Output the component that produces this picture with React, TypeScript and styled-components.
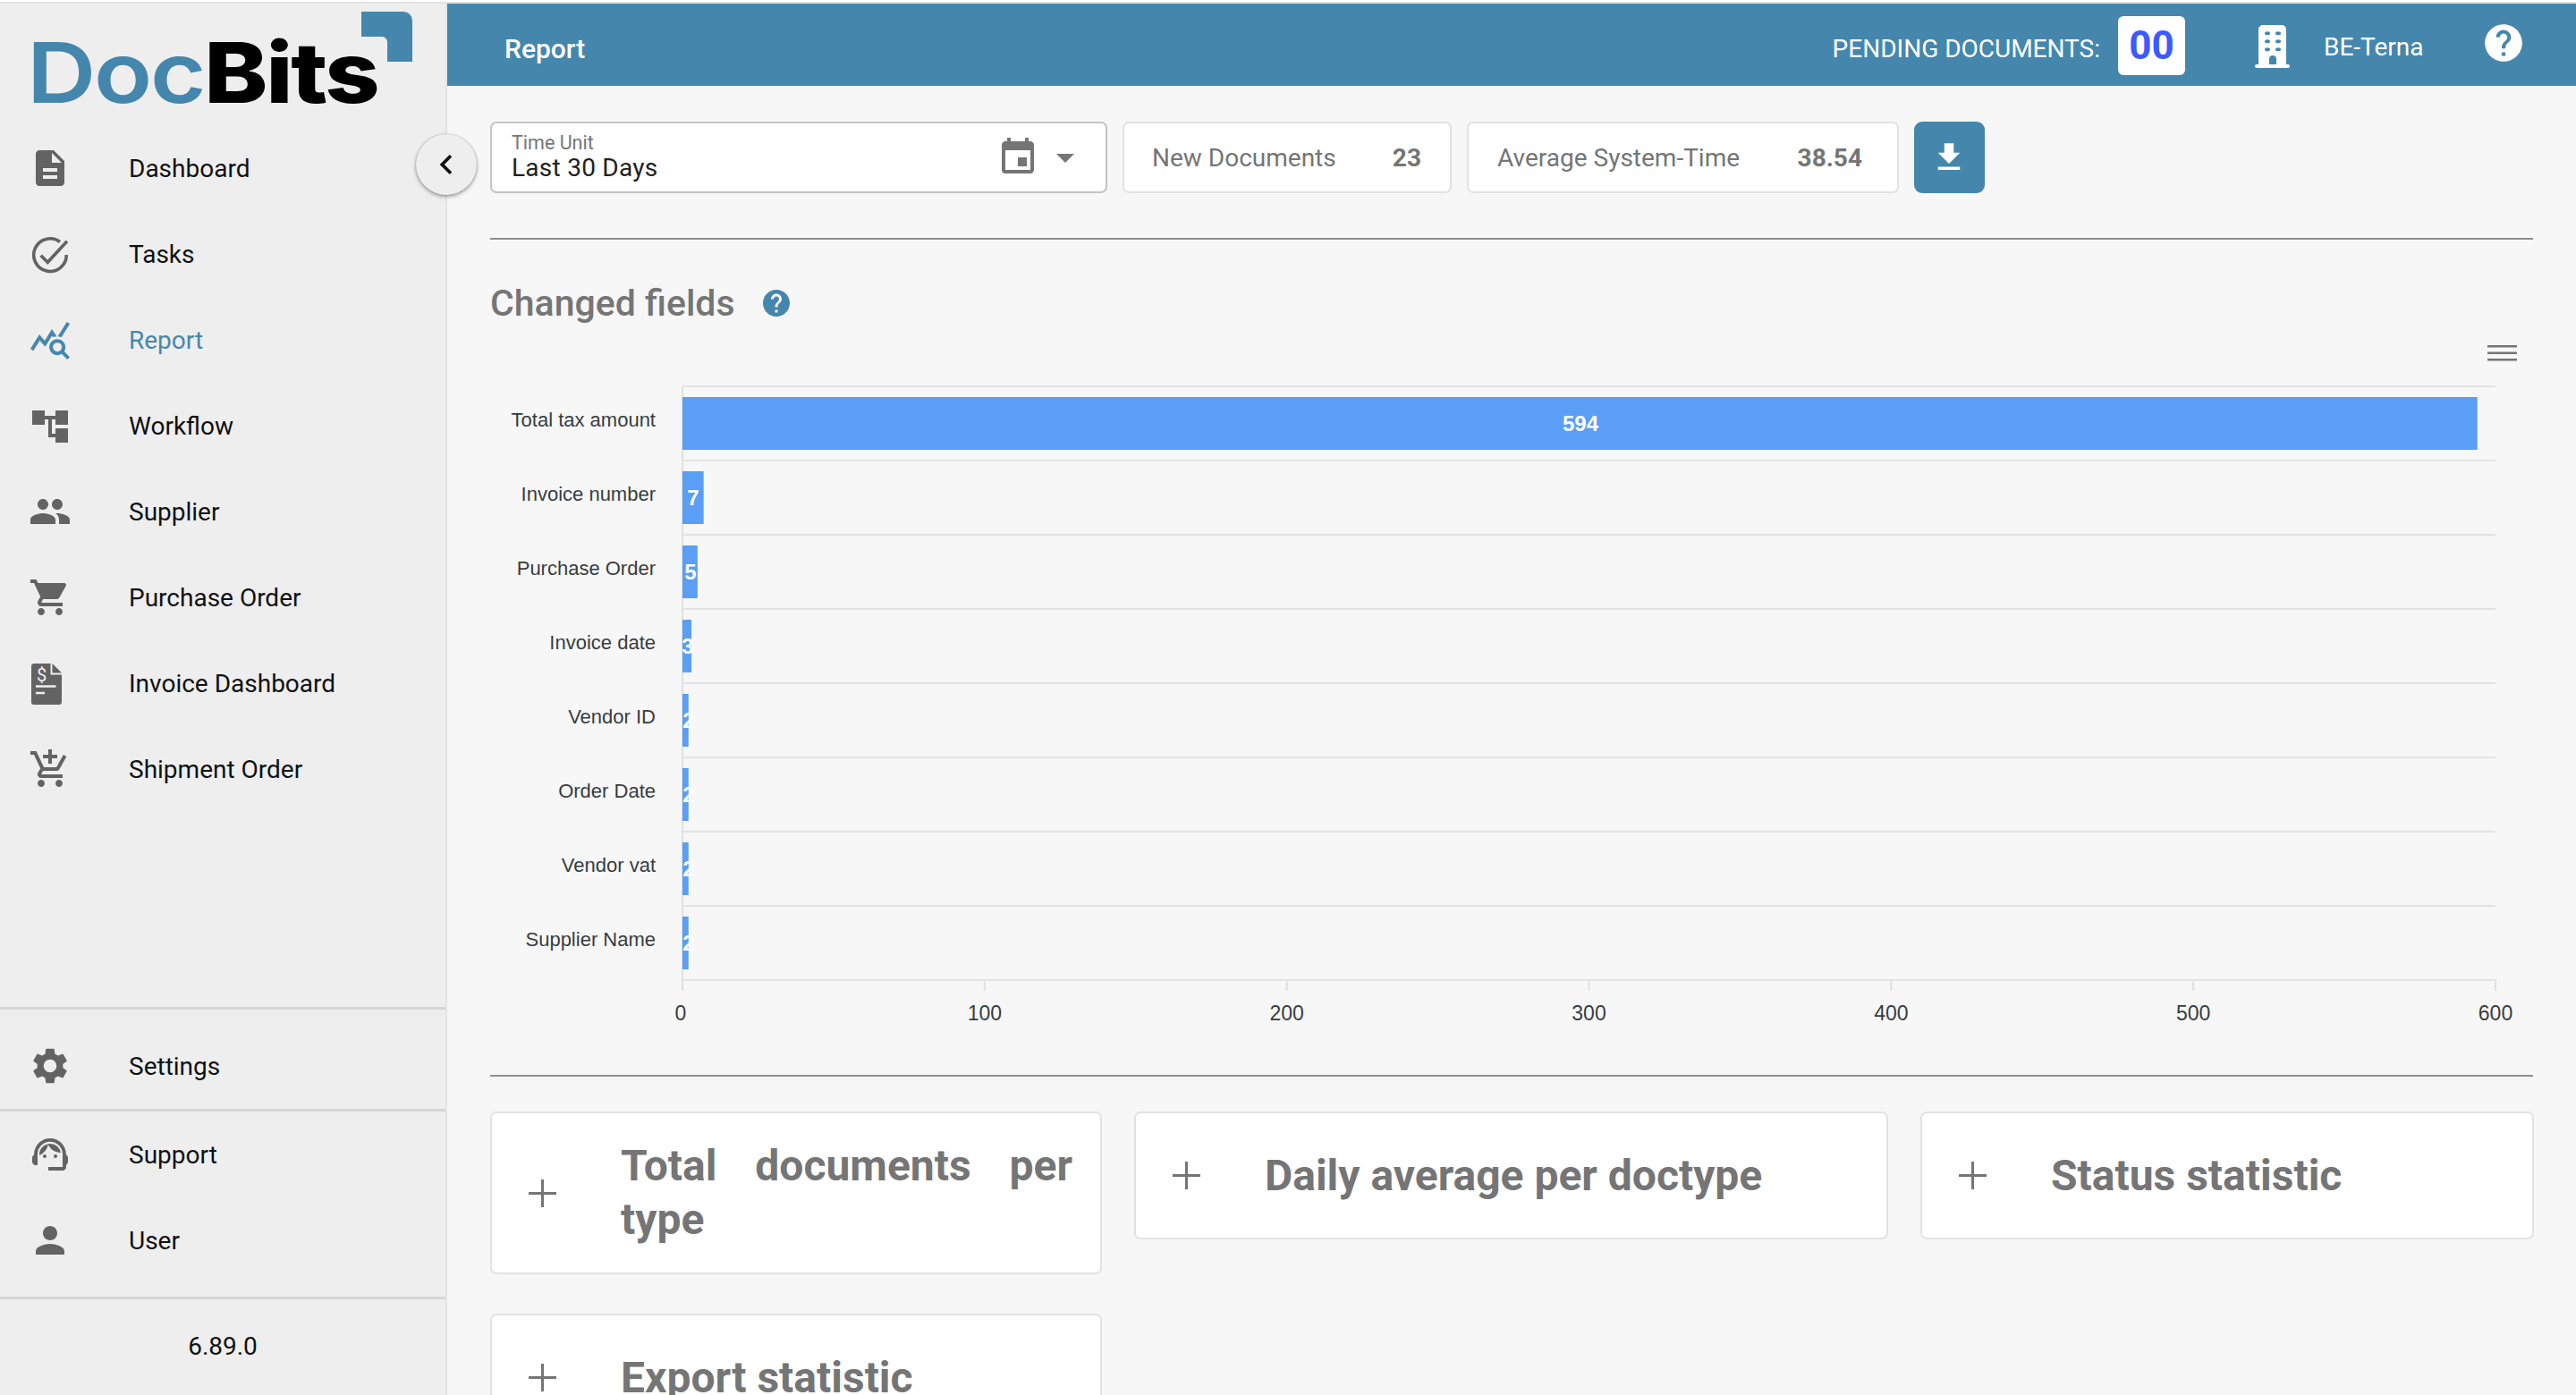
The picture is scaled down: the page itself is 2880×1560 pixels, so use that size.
import React from "react";
import styled, { createGlobalStyle } from "styled-components";
import {
  MdDescription,
  MdQueryStats,
  MdPeople,
  MdShoppingCart,
  MdOutlineAddShoppingCart,
  MdSettings,
  MdSupportAgent,
  MdPerson,
  MdEvent,
  MdArrowDropDown,
  MdHelp,
  MdFileDownload,
  MdChevronLeft,
} from "react-icons/md";

const BLUE = "#4587ac";

const GlobalStyle = createGlobalStyle`
  html, body {
    margin: 0;
    padding: 0;
    height: 100%;
    overflow: hidden;
    background: #fff;
    font-family: Roboto, "Liberation Sans", sans-serif;
  }
  * {
    box-sizing: border-box;
  }
`;

const Page = styled.div`
  display: flex;
  width: 2880px;
  height: 1558px;
  margin-top: 2px;
  border-top: 2px solid #e2e2e2;
  background: #f7f7f7;
  overflow: hidden;
`;

const Sidebar = styled.aside`
  position: relative;
  display: flex;
  flex-direction: column;
  flex: 0 0 500px;
  height: 1556px;
  background: #eeeeee;
  border-right: 2px solid #e4e4e4;
`;

const LogoArea = styled.div`
  position: relative;
  flex: 0 0 136px;
`;

const LogoText = styled.div`
  position: absolute;
  left: 30px;
  top: 21px;
  font-family: Inter, sans-serif;
  font-size: 94px;
  line-height: 112px;
  font-weight: 800;
  letter-spacing: -2px;
  color: #000;
  white-space: nowrap;
  transform: scaleX(1.14);
  transform-origin: left center;
`;

const LogoDoc = styled.span`
  color: ${BLUE};
  font-weight: 600;
`;

const LogoCorner = styled.svg`
  position: absolute;
  left: 404px;
  top: 9px;
  width: 57px;
  height: 56px;
`;

const NavList = styled.nav`
  display: flex;
  flex-direction: column;
  flex: 1;
`;

const NavRow = styled.div<{ $active?: boolean }>`
  display: flex;
  align-items: center;
  flex: 0 0 96px;
  height: 96px;
  padding-left: 32px;
  gap: 64px;
  font-size: 28px;
  color: ${(p) => (p.$active ? BLUE : "#111")};
  svg {
    flex: 0 0 48px;
    width: 48px;
    height: 48px;
    color: ${(p) => (p.$active ? BLUE : "#636363")};
  }
`;

const SideSection = styled.div<{ $height: number; $padTop?: number }>`
  display: flex;
  flex-direction: column;
  flex: 0 0 ${(p) => p.$height}px;
  padding-top: ${(p) => p.$padTop ?? 0}px;
  border-top: 3px solid #d6d6d6;
`;

const Version = styled.div`
  display: flex;
  align-items: center;
  justify-content: center;
  flex: 0 0 110px;
  border-top: 3px solid #d6d6d6;
  padding-bottom: 3px;
  font-size: 28px;
  color: #111;
`;

const CollapseButton = styled.button`
  position: absolute;
  left: 465px;
  top: 146px;
  display: flex;
  align-items: center;
  justify-content: center;
  width: 68px;
  height: 68px;
  padding: 0;
  border: none;
  border-radius: 50%;
  background: #eeeeee;
  box-shadow: 0 2px 4px rgba(0, 0, 0, 0.35), 0 0 2px rgba(0, 0, 0, 0.25);
  color: #111;
  z-index: 2;
  svg {
    width: 44px;
    height: 44px;
  }
`;

const Main = styled.main`
  display: flex;
  flex-direction: column;
  flex: 1;
  min-width: 0;
`;

const Header = styled.header`
  display: flex;
  align-items: center;
  flex: 0 0 92px;
  padding-left: 64px;
  background: ${BLUE};
  color: #fff;
`;

const HeaderTitle = styled.div`
  flex: 1;
  margin-top: 9px;
  font-size: 30px;
  font-weight: 500;
`;

const PendingLabel = styled.span`
  margin: 9px 20px 0 0;
  font-size: 28px;
`;

const PendingCount = styled.div`
  display: flex;
  align-items: center;
  justify-content: center;
  width: 75px;
  height: 66px;
  margin-top: 2px;
  border-radius: 6px;
  background: #fff;
  color: #3d5afe;
  font-size: 44px;
  font-weight: 700;
`;

const BuildingIcon = styled.svg`
  width: 39px;
  height: 48px;
  margin: 4px 38px 0 78px;
`;

const TenantName = styled.span`
  width: 181px;
  margin-top: 5px;
  font-size: 28px;
`;

const HelpButton = styled.div`
  display: flex;
  width: 60px;
  margin: 0 46px 4px -5px;
  svg {
    width: 50px;
    height: 50px;
  }
`;

const Content = styled.div`
  display: flex;
  flex-direction: column;
  padding: 40px 48px 0;
`;

const Toolbar = styled.div`
  display: flex;
  align-items: stretch;
  flex: 0 0 80px;
  gap: 17px;
`;

const SelectBox = styled.div`
  display: flex;
  align-items: center;
  width: 690px;
  padding: 0 26px 0 22px;
  background: #fff;
  border: 2px solid #c4c4c4;
  border-radius: 7px;
`;

const SelectText = styled.div`
  display: flex;
  flex-direction: column;
  flex: 1;
`;

const SelectLabel = styled.span`
  font-size: 21.5px;
  line-height: 24px;
  color: #757575;
`;

const SelectValue = styled.span`
  font-size: 28px;
  line-height: 32px;
  letter-spacing: 0.26px;
  color: #212121;
`;

const CalendarGlyph = styled(MdEvent)`
  width: 48px;
  height: 48px;
  color: #757575;
`;

const DropGlyph = styled(MdArrowDropDown)`
  width: 48px;
  height: 48px;
  margin: 0 -5px 0 5px;
  color: #757575;
`;

const StatCard = styled.div<{ $width: number; $padLeft: number; $padRight: number }>`
  display: flex;
  align-items: center;
  justify-content: space-between;
  width: ${(p) => p.$width}px;
  padding: 0 ${(p) => p.$padRight}px 0 ${(p) => p.$padLeft}px;
  background: #fff;
  border: 2px solid #e2e2e2;
  border-radius: 7px;
  font-size: 28px;
  color: #757575;
`;

const StatValue = styled.b`
  font-weight: 700;
`;

const DownloadButton = styled.button`
  display: flex;
  align-items: center;
  justify-content: center;
  width: 79px;
  padding: 0 2px 0 0;
  border: none;
  border-radius: 9px;
  background: ${BLUE};
  color: #fff;
  svg {
    width: 42px;
    height: 42px;
  }
`;

const Divider = styled.hr<{ $top?: number }>`
  flex: 0 0 2px;
  width: 100%;
  height: 2px;
  margin: ${(p) => p.$top ?? 0}px 0 0;
  border: none;
  background: #8f8f8f;
`;

const ChartHeading = styled.div`
  display: flex;
  align-items: center;
  gap: 28px;
  height: 46px;
  margin-top: 48px;
  font-size: 41px;
  font-weight: 500;
  color: #757575;
  svg {
    width: 36px;
    height: 36px;
    color: ${BLUE};
  }
`;

const ChartMenu = styled.svg`
  align-self: flex-end;
  flex: 0 0 18px;
  width: 33px;
  height: 18px;
  margin: 24px 18px 0 0;
`;

const ChartSvg = styled.svg`
  display: block;
  flex: 0 0 787px;
  width: 2284px;
  height: 787px;
  margin-top: 11px;
`;

const CardGrid = styled.div`
  display: grid;
  grid-template-columns: 684px 843px 686px;
  column-gap: 36px;
  row-gap: 44px;
  align-items: start;
  margin-top: 39px;
`;

const Card = styled.div`
  display: flex;
  align-items: center;
  min-height: 143px;
  padding: 29px 31px 29px 41px;
  background: #fff;
  border: 2px solid #e2e2e2;
  border-radius: 7px;
  color: #757575;
`;

const PlusIcon = styled.svg`
  flex: 0 0 31px;
  width: 31px;
  height: 31px;
  margin-right: 72px;
`;

const CardTitle = styled.div`
  flex: 1;
  font-size: 48px;
  line-height: 60px;
  font-weight: 700;
  text-align: justify;
`;

const mainNav = [
  { label: "Dashboard", icon: <MdDescription /> },
  {
    label: "Tasks",
    icon: (
      <svg viewBox="0 0 48 48" fill="none" stroke="currentColor" strokeWidth="3.6">
        <path d="M35 10.5A18.3 18.3 0 1 0 42.3 25" />
        <path d="M13.7 25.7l7.6 7.6L43 9.7" />
      </svg>
    ),
  },
  { label: "Report", icon: <MdQueryStats />, active: true },
  {
    label: "Workflow",
    icon: (
      <svg viewBox="0 0 48 48" fill="currentColor">
        <path d="M4 7h14v16H4zM30 7h14v16H30zM30 27h14v16H30z" />
        <path d="M18 13h12v4h-4v16h4v4h-8V17h-4z" />
      </svg>
    ),
  },
  { label: "Supplier", icon: <MdPeople /> },
  { label: "Purchase Order", icon: <MdShoppingCart /> },
  {
    label: "Invoice Dashboard",
    icon: (
      <svg viewBox="0 0 48 48" fill="currentColor">
        <path d="M6 2h18.5v12.5H37V45a3 3 0 0 1-3 3H6a3 3 0 0 1-3-3V5a3 3 0 0 1 3-3z" />
        <path d="M26.5 2L37 12.5H26.5z" />
        <path d="M8 26.3h22.5v2.4H8zM8 33.8h10v2.4H8z" fill="#eeeeee" />
        <text x="14.5" y="22" textAnchor="middle" fontSize="20" fontFamily="Roboto, sans-serif" fill="#eeeeee">
          $
        </text>
      </svg>
    ),
  },
  { label: "Shipment Order", icon: <MdOutlineAddShoppingCart /> },
];

const chartRows = [
  { name: "Total tax amount", value: 594, labelX: 1219 },
  { name: "Invoice number", value: 7, labelX: 227 },
  { name: "Purchase Order", value: 5, labelX: 224 },
  { name: "Invoice date", value: 3, labelX: 221 },
  { name: "Vendor ID", value: 2, labelX: 222 },
  { name: "Order Date", value: 2, labelX: 222 },
  { name: "Vendor vat", value: 2, labelX: 222 },
  { name: "Supplier Name", value: 2, labelX: 222 },
];

const CHART_LEFT = 215;
const CHART_TOP = 17;
const ROW = 83;
const UNIT = 2027 / 600;

const BarChart: React.FC = () => (
  <ChartSvg viewBox="0 0 2284 787" fontFamily='"Liberation Sans", Arial, sans-serif'>
    <line x1={CHART_LEFT} x2={CHART_LEFT} y1={CHART_TOP} y2={CHART_TOP + ROW * 8 + 12} stroke="#e0e0e0" strokeWidth="2" />
    {[...chartRows, null].map((_, i) => (
      <line
        key={i}
        x1={CHART_LEFT}
        x2={CHART_LEFT + 2027}
        y1={CHART_TOP + ROW * i}
        y2={CHART_TOP + ROW * i}
        stroke="#e3e3e3"
        strokeWidth="2"
      />
    ))}
    {[0, 100, 200, 300, 400, 500, 600].map((tick) => (
      <g key={tick}>
        <line
          x1={CHART_LEFT + tick * UNIT}
          x2={CHART_LEFT + tick * UNIT}
          y1={CHART_TOP + ROW * 8}
          y2={CHART_TOP + ROW * 8 + 12}
          stroke="#e0e0e0"
          strokeWidth="2"
        />
        <text
          x={CHART_LEFT + tick * UNIT - (tick === 0 ? 2 : 0)}
          y={CHART_TOP + ROW * 8 + 45}
          textAnchor="middle"
          fontSize="23"
          fill="#373d3f"
        >
          {tick}
        </text>
      </g>
    ))}
    {chartRows.map((row, i) => {
      const top = CHART_TOP + ROW * i;
      return (
        <g key={row.name}>
          <text x={185} y={top + 45} textAnchor="end" fontSize="22" fill="#373d3f">
            {row.name}
          </text>
          <rect x={CHART_LEFT} y={top + 12} width={row.value * UNIT} height={59} fill="#5a9ef5" />
          <text x={row.labelX} y={top + 50} textAnchor="middle" fontSize="24" fontWeight="700" fill="#fff">
            {row.value}
          </text>
        </g>
      );
    })}
  </ChartSvg>
);

const Plus: React.FC = () => (
  <PlusIcon viewBox="0 0 31 31" stroke="#757575" strokeWidth="3">
    <path d="M15.5 0v31M0 15.5h31" />
  </PlusIcon>
);

const App: React.FC = () => (
  <Page>
    <GlobalStyle />
    <Sidebar>
      <LogoArea>
        <LogoText>
          <LogoDoc>Doc</LogoDoc>Bits
        </LogoText>
        <LogoCorner viewBox="0 0 57 56" fill={BLUE}>
          <path d="M0 0h47a10 10 0 0 1 10 10v46H29V34a6 6 0 0 0-6-6H0z" />
        </LogoCorner>
      </LogoArea>
      <NavList>
        {mainNav.map((item) => (
          <NavRow key={item.label} $active={item.active}>
            {item.icon}
            {item.label}
          </NavRow>
        ))}
      </NavList>
      <SideSection $height={114} $padTop={15}>
        <NavRow>
          <MdSettings />
          Settings
        </NavRow>
      </SideSection>
      <SideSection $height={210}>
        <NavRow>
          <MdSupportAgent />
          Support
        </NavRow>
        <NavRow>
          <MdPerson />
          User
        </NavRow>
      </SideSection>
      <Version>6.89.0</Version>
      <CollapseButton>
        <MdChevronLeft />
      </CollapseButton>
    </Sidebar>
    <Main>
      <Header>
        <HeaderTitle>Report</HeaderTitle>
        <PendingLabel>PENDING DOCUMENTS:</PendingLabel>
        <PendingCount>00</PendingCount>
        <BuildingIcon viewBox="0 0 39 48" fill="#fff">
          <path d="M4 5a5 5 0 0 1 5-5h21a5 5 0 0 1 5 5v39h2a2 2 0 0 1 0 4H2a2 2 0 0 1 0-4h2z" />
          <g fill={BLUE}>
            <ellipse cx="14" cy="9.3" rx="3" ry="2" />
            <ellipse cx="26" cy="9.3" rx="3" ry="2" />
            <ellipse cx="14" cy="18.3" rx="3" ry="2" />
            <ellipse cx="26" cy="18.3" rx="3" ry="2" />
            <ellipse cx="14" cy="27.3" rx="3" ry="2" />
            <ellipse cx="26" cy="27.3" rx="3" ry="2" />
            <path d="M16 44v-6a4 4 0 0 1 8 0v6z" />
          </g>
        </BuildingIcon>
        <TenantName>BE-Terna</TenantName>
        <HelpButton>
          <MdHelp />
        </HelpButton>
      </Header>
      <Content>
        <Toolbar>
          <SelectBox>
            <SelectText>
              <SelectLabel>Time Unit</SelectLabel>
              <SelectValue>Last 30 Days</SelectValue>
            </SelectText>
            <CalendarGlyph />
            <DropGlyph />
          </SelectBox>
          <StatCard $width={368} $padLeft={31} $padRight={32}>
            New Documents
            <StatValue>23</StatValue>
          </StatCard>
          <StatCard $width={483} $padLeft={32} $padRight={39}>
            Average System-Time
            <StatValue>38.54</StatValue>
          </StatCard>
          <DownloadButton>
            <MdFileDownload />
          </DownloadButton>
        </Toolbar>
        <Divider $top={50} />
        <ChartHeading>
          Changed fields
          <MdHelp />
        </ChartHeading>
        <ChartMenu viewBox="0 0 33 18" fill="#757575">
          <path d="M0 0h33v2.5H0zM0 7.5h33V10H0zM0 15h33v2.5H0z" />
        </ChartMenu>
        <BarChart />
        <Divider />
        <CardGrid>
          <Card>
            <Plus />
            <CardTitle>Total documents per type</CardTitle>
          </Card>
          <Card>
            <Plus />
            <CardTitle>Daily average per doctype</CardTitle>
          </Card>
          <Card>
            <Plus />
            <CardTitle>Status statistic</CardTitle>
          </Card>
          <Card>
            <Plus />
            <CardTitle>Export statistic</CardTitle>
          </Card>
        </CardGrid>
      </Content>
    </Main>
  </Page>
);

export default App;
